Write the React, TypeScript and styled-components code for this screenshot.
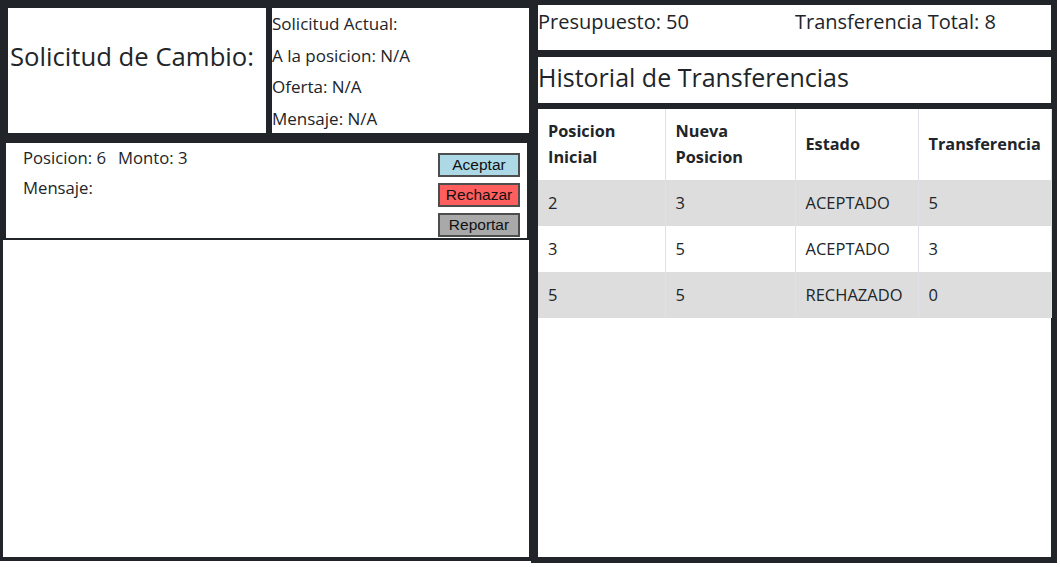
import React from "react";
import styled, { createGlobalStyle } from "styled-components";

const Global = createGlobalStyle`
  html, body { margin: 0; padding: 0; background: #ffffff; }
  body { font-family: "Open Sans", "Noto Sans", sans-serif; color: #212529; font-size: 16px; }
  * { box-sizing: border-box; }
`;

const Page = styled.div`
  display: flex;
  align-items: flex-start;
  width: 1060px;
  height: 567px;
  background: #ffffff;
`;

const LeftColumn = styled.div`
  width: 531px;
  height: 561px;
  background: #212529;
  display: flex;
  flex-direction: column;
`;

const TopRow = styled.div`
  display: flex;
  gap: 6px;
  padding: 8px 2px 0 8px;
  height: 133px;
`;

const TitleBox = styled.div`
  width: 258px;
  height: 125px;
  background: #ffffff;
  padding: 33px 0 0 2px;
  font-size: 25.7px;
  line-height: 32px;
  white-space: nowrap;
`;

const CurrentBox = styled.div`
  width: 257px;
  height: 125px;
  background: #ffffff;
  padding: 4px 0 2px 0;
  display: flex;
  flex-direction: column;
  justify-content: space-between;
  font-size: 17px;
  line-height: 24px;
`;

const Line = styled.div`
  white-space: nowrap;
`;

const RequestPanel = styled.div`
  margin: 10px 4px 0 6px;
  height: 95px;
  background: #ffffff;
  display: flex;
  justify-content: space-between;
  padding: 3px 7px 0 17px;
`;

const RequestInfo = styled.div`
  display: flex;
  flex-direction: column;
  gap: 6px;
  font-size: 16.7px;
  line-height: 24px;
`;

const InfoRow = styled.div`
  display: flex;
  gap: 12px;
`;

const ButtonStack = styled.div`
  display: flex;
  flex-direction: column;
  gap: 6px;
  padding-top: 7px;
`;

const ActionButton = styled.button<{ $bg: string }>`
  width: 82px;
  height: 24px;
  padding: 0;
  background: ${(p) => p.$bg};
  border: 2px solid #4d4d4d;
  font-family: "Liberation Sans", Arial, sans-serif;
  font-size: 15.5px;
  color: #111;
  line-height: 18px;
`;

const Canvas = styled.div`
  margin: 2px 2px 0 3px;
  height: 317px;
  background: #ffffff;
`;

const RightColumn = styled.div`
  width: 526px;
  height: 563px;
  background: #212529;
  padding: 5px 6px 6px 7px;
  display: flex;
  flex-direction: column;
  gap: 6px;
`;

const StatsBox = styled.div`
  height: 45px;
  background: #ffffff;
  display: grid;
  grid-template-columns: 257px 1fr;
  padding-top: 2px;
  font-size: 20px;
  line-height: 30px;
`;

const HistoryBox = styled.div`
  height: 46px;
  background: #ffffff;
  font-size: 25px;
  line-height: 41px;
  margin-top: 1px;
  white-space: nowrap;
`;

const TablePanel = styled.div`
  flex: 1;
  background: #ffffff;
`;

const Table = styled.table`
  width: 513px;
  border-collapse: collapse;
  table-layout: fixed;
  font-size: 16.5px;
  line-height: 24px;
`;

const HeadCell = styled.th<{ $w: number }>`
  width: ${(p) => p.$w}px;
  text-align: left;
  font-weight: 700;
  font-size: 16.3px;
  line-height: 26px;
  padding: 9px 10px 10px;
  border-right: 1px solid #dee2e6;
  vertical-align: middle;
`;

const Row = styled.tr<{ $shade: boolean }>`
  background: ${(p) => (p.$shade ? "#dddddd" : "#ffffff")};
`;

const Cell = styled.td`
  padding: 11px 10px;
  border-right: 1px solid #dee2e6;
  white-space: nowrap;
`;

const rows = [
  ["2", "3", "ACEPTADO", "5"],
  ["3", "5", "ACEPTADO", "3"],
  ["5", "5", "RECHAZADO", "0"],
];

export default function App() {
  return (
    <>
      <Global />
      <Page>
        <LeftColumn>
          <TopRow>
            <TitleBox>Solicitud de Cambio:</TitleBox>
            <CurrentBox>
              <Line>Solicitud Actual:</Line>
              <Line>A la posicion: N/A</Line>
              <Line>Oferta: N/A</Line>
              <Line>Mensaje: N/A</Line>
            </CurrentBox>
          </TopRow>
          <RequestPanel>
            <RequestInfo>
              <InfoRow>
                <span>Posicion: 6</span>
                <span>Monto: 3</span>
              </InfoRow>
              <div>Mensaje:</div>
            </RequestInfo>
            <ButtonStack>
              <ActionButton $bg="#add8e6">Aceptar</ActionButton>
              <ActionButton $bg="#ff5e5e">Rechazar</ActionButton>
              <ActionButton $bg="#a9a9a9">Reportar</ActionButton>
            </ButtonStack>
          </RequestPanel>
          <Canvas />
        </LeftColumn>
        <RightColumn>
          <StatsBox>
            <span>Presupuesto: 50</span>
            <span>Transferencia Total: 8</span>
          </StatsBox>
          <HistoryBox>Historial de Transferencias</HistoryBox>
          <TablePanel>
            <Table>
              <thead>
                <tr>
                  <HeadCell $w={127}>Posicion Inicial</HeadCell>
                  <HeadCell $w={130}>Nueva Posicion</HeadCell>
                  <HeadCell $w={123}>Estado</HeadCell>
                  <HeadCell $w={133}>Transferencia</HeadCell>
                </tr>
              </thead>
              <tbody>
                {rows.map((r, i) => (
                  <Row key={i} $shade={i % 2 === 0}>
                    {r.map((c, j) => (
                      <Cell key={j}>{c}</Cell>
                    ))}
                  </Row>
                ))}
              </tbody>
            </Table>
          </TablePanel>
        </RightColumn>
      </Page>
    </>
  );
}
